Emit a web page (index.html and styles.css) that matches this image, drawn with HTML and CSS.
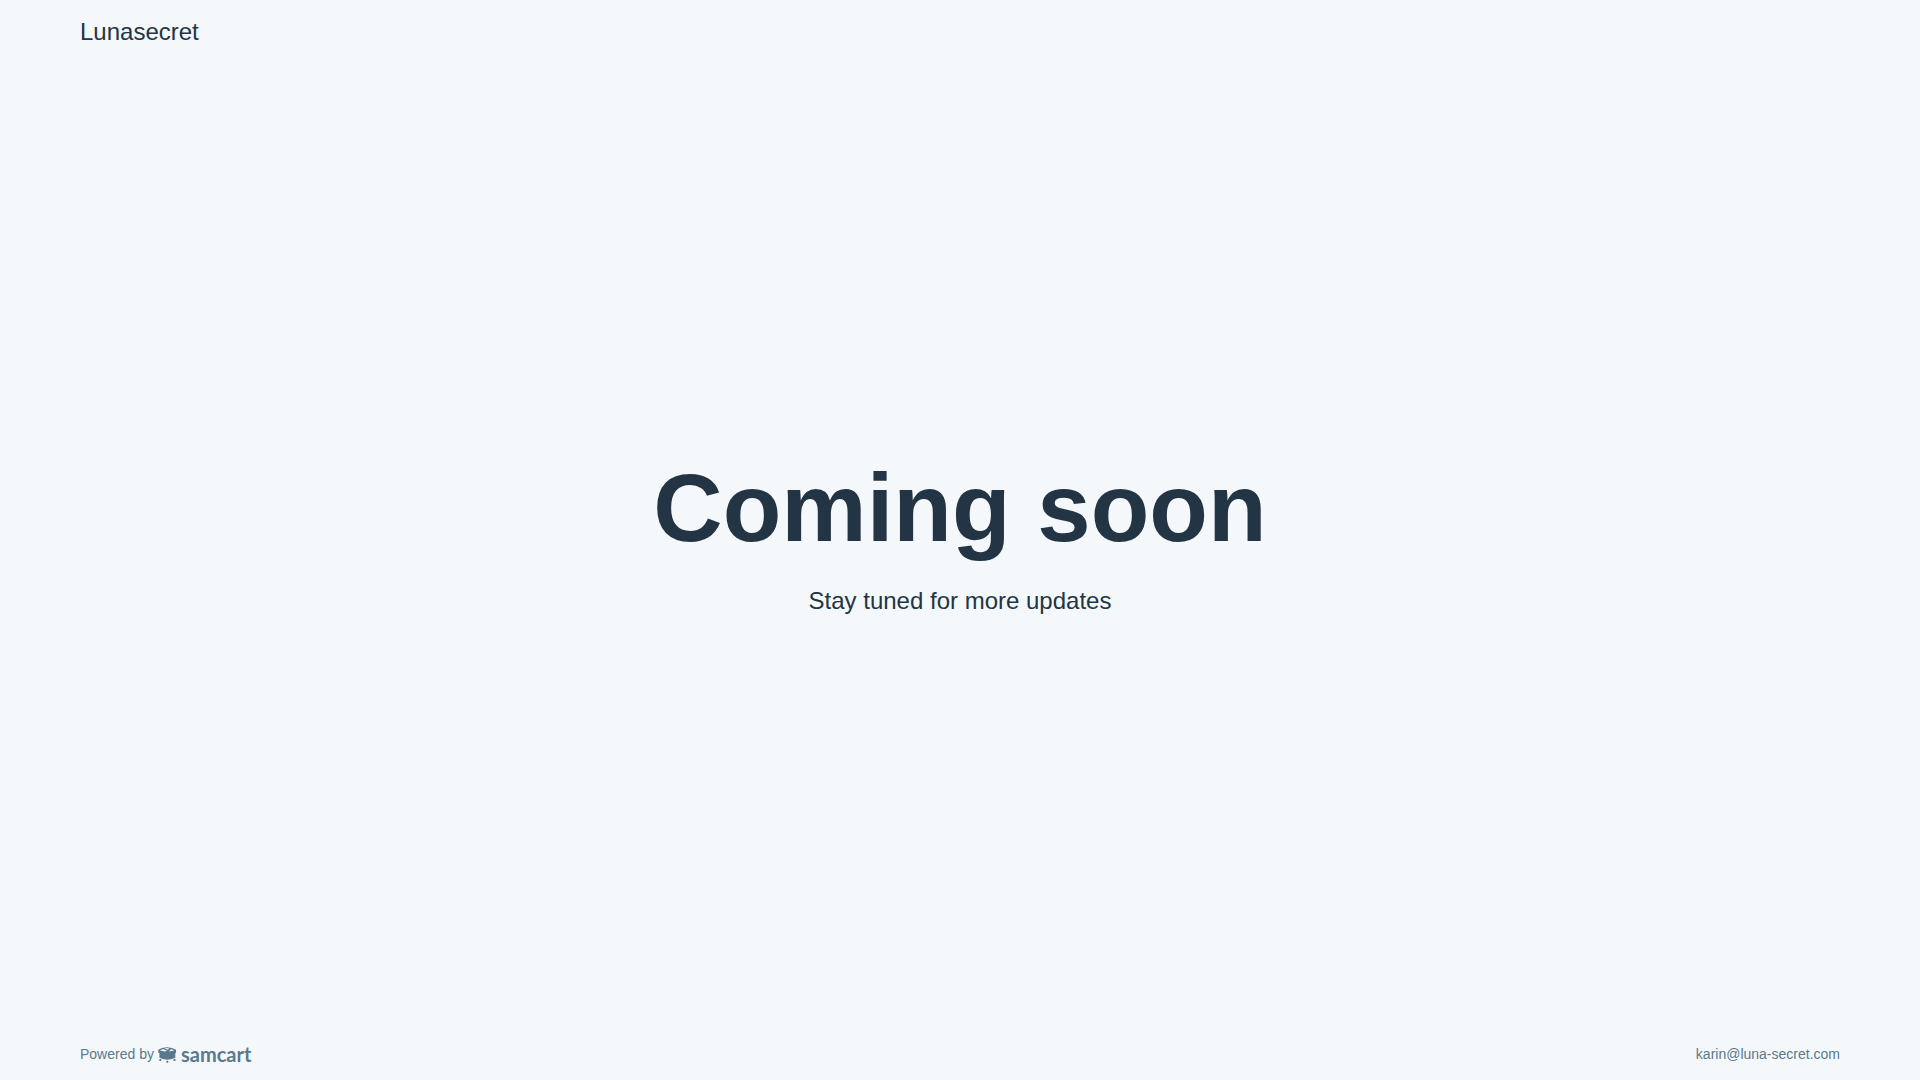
FILE: index.html
```html
<!DOCTYPE html>
<html lang="en">
<head>
    <meta charset="UTF-8">
    <meta name="viewport" content="width=device-width, initial-scale=1.0">
    <title>Lunasecret</title>
    <link rel="stylesheet" href="styles.css">
</head>
<body>

    <header class="header">
        <span class="brand">Lunasecret</span>
    </header>

    <main class="content">
        <h1 class="title">Coming soon</h1>
        <p class="subtitle">Stay tuned for more updates</p>
    </main>

    <footer class="footer">
        <div class="powered">
            <span>Powered by</span>
            <a class="logo" href="#">
                <svg class="logo-icon" viewBox="0 -2 18 18" aria-hidden="true">
                    <!-- Basket with the openings cut out of the top -->
                    <path fill-rule="evenodd" d="M0.3 2.8 L4 1 L9 0.2 L14 1 L18 2.8 V5.8 L17.3 6.2 V10.8 L14 12 L9.3 12.7 L4.6 12 L1.4 10.8 V6.2 L0.3 5.8 Z M1.8 3.4 L7.4 4.6 L8.9 3.4 L5 2.1 Z M6.4 1.6 L10 2.7 L11.2 1.4 L9 1.1 Z M10.8 4.5 L16.4 3.4 L13.2 2 Z"/>
                    <!-- Wheels -->
                    <rect x="1.3" y="12.1" width="2" height="2" rx="0.6"/>
                    <rect x="8.3" y="13.8" width="2" height="2" rx="0.6"/>
                    <rect x="15.5" y="12.1" width="2" height="2" rx="0.6"/>
                </svg>
                <span class="logo-name">samcart</span>
            </a>
        </div>
        <a class="email" href="mailto:karin@luna-secret.com">karin@luna-secret.com</a>
    </footer>

</body>
</html>
```
FILE: styles.css
```css
* {
    margin: 0;
    padding: 0;
    box-sizing: border-box;
}

body {
    display: flex;
    flex-direction: column;
    min-height: 100vh;
    background-color: #f4f8fb;
    color: #233544;
    font-family: "Liberation Sans", Arial, sans-serif;
}

a {
    color: inherit;
    text-decoration: none;
}

.header {
    padding: 16px 80px;
}

.brand {
    display: block;
    font-size: 24px;
    line-height: 32px;
}

/* Centered message */
.content {
    flex: 1;
    display: flex;
    flex-direction: column;
    align-items: center;
    justify-content: center;
    gap: 18px;
    text-align: center;
}

.title {
    font-size: 96px;
    line-height: 118px;
}

.subtitle {
    font-size: 24px;
    line-height: 32px;
}

/* Footer */
.footer {
    display: flex;
    justify-content: space-between;
    align-items: center;
    padding: 40px 80px 14px;
    color: #5c788c;
    font-size: 14px;
    line-height: 24px;
}

.powered,
.logo {
    display: flex;
    align-items: center;
}

.powered {
    gap: 4px;
}

.logo {
    gap: 5px;
}

.logo-icon {
    width: 18px;
    height: 18px;
    fill: currentColor;
}

.logo-name {
    font-family: Lato, sans-serif;
    font-size: 20px;
    font-weight: bold;
}
```
